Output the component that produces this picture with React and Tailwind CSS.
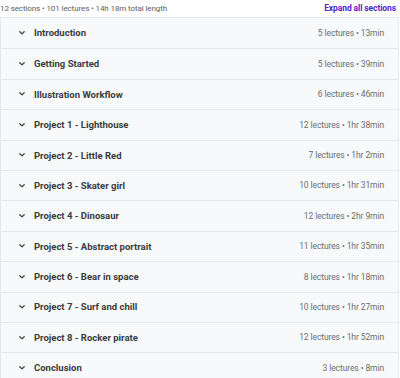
import React from "react";

const sections = [
  ["Introduction", "5 lectures • 13min"],
  ["Getting Started", "5 lectures • 39min"],
  ["Illustration Workflow", "6 lectures • 46min"],
  ["Project 1 - Lighthouse", "12 lectures • 1hr 38min"],
  ["Project 2 - Little Red", "7 lectures • 1hr 2min"],
  ["Project 3 - Skater girl", "10 lectures • 1hr 31min"],
  ["Project 4 - Dinosaur", "12 lectures • 2hr 9min"],
  ["Project 5 - Abstract portrait", "11 lectures • 1hr 35min"],
  ["Project 6 - Bear in space", "8 lectures • 1hr 18min"],
  ["Project 7 - Surf and chill", "10 lectures • 1hr 27min"],
  ["Project 8 - Rocker pirate", "12 lectures • 1hr 52min"],
  ["Conclusion", "3 lectures • 8min"],
];

function Chevron() {
  return (
    <svg width="8" height="6" viewBox="0 0 8 6" className="shrink-0">
      <path d="M1.8 1.8 L4 3.9 L6.2 1.8" fill="none" stroke="#3e4143" strokeWidth="1.3" strokeLinecap="round" strokeLinejoin="round" />
    </svg>
  );
}

export default function App() {
  return (
    <div className="w-[400px] h-[378px] overflow-hidden bg-white" style={{ fontFamily: "Roboto, 'Noto Sans', sans-serif" }}>
      <div className="flex items-center justify-between h-[17px] pr-[4px]">
        <span className="text-[8px] text-[#5d6165] leading-none tracking-[-0.1px]">12 sections • 101 lectures • 14h 18m total length</span>
        <span className="text-[8.5px] font-bold text-[#5624d0] leading-none tracking-[-0.1px]">Expand all sections</span>
      </div>
      <div className="border border-[#e6e9ec] mr-[1px]">
        {sections.map(([title, meta], i) => (
          <div
            key={i}
            className={`flex items-center h-[30.4px] bg-[#f7f9fa] pl-[17px] pr-[14px] ${i > 0 ? "border-t border-[#e6e9ec]" : ""}`}
          >
            <Chevron />
            <span className="ml-[8px] text-[9.5px] font-bold text-[#3a3c3e] leading-none">{title}</span>
            <span className="ml-auto text-[8.5px] text-[#6a6f73] leading-none tracking-[-0.1px]">{meta}</span>
          </div>
        ))}
      </div>
    </div>
  );
}
